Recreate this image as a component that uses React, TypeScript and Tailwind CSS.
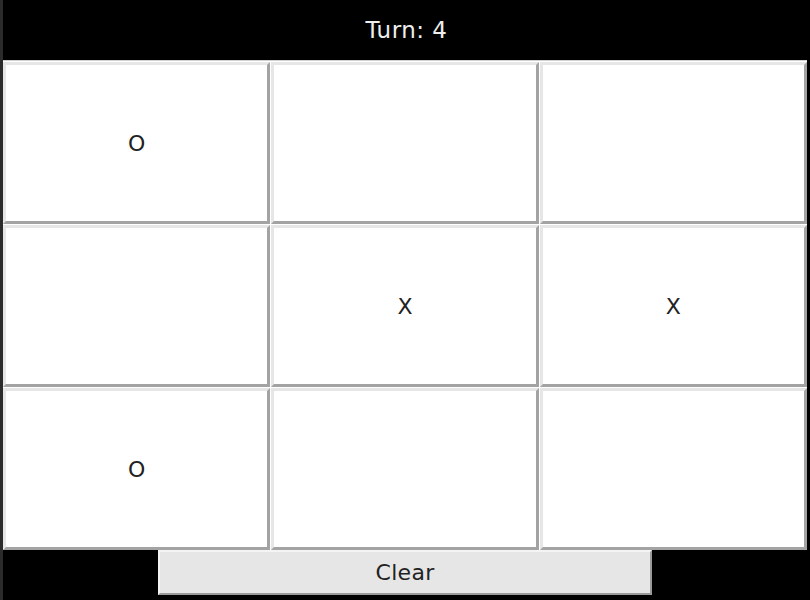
import React from "react";

const cells = ["O", "", "", "", "X", "X", "O", "", ""];

export default function App() {
  return (
    <div
      className="w-[810px] h-[600px] bg-black border-l-[3px] border-[#2b2b2b] flex flex-col overflow-hidden"
      style={{ fontFamily: '"DejaVu Sans", sans-serif' }}
    >
      <div className="h-[60px] flex items-center justify-center text-[23px] tracking-[0.5px] text-[#eeeeee]">
        Turn: 4
      </div>
      <div className="w-[804px] bg-white border-t border-[#d0d0d0] grid grid-cols-3 gap-px pt-px">
        {cells.map((c, i) => (
          <div
            key={i}
            className="h-[162px] flex items-center justify-center bg-white text-[22px] text-[#222222] border-[3px] border-t-[#e6e6e6] border-l-[#e6e6e6] border-b-[#a3a3a3] border-r-[#a3a3a3]"
          >
            {c}
          </div>
        ))}
      </div>
      <div className="w-[807px] flex justify-center">
        <div className="w-[494px] h-[45px] mr-[3px] flex items-center justify-center bg-[#e6e6e6] text-[22px] tracking-[0.3px] text-[#222222] border-2 border-t-[#f4f4f4] border-l-[#f4f4f4] border-b-[#9a9a9a] border-r-[#9a9a9a]">
          Clear
        </div>
      </div>
    </div>
  );
}
